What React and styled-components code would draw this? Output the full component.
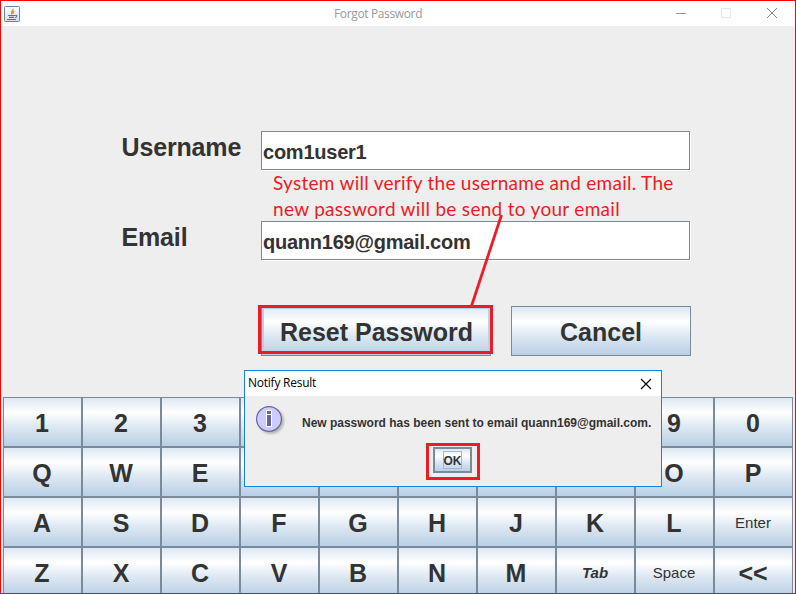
import React from 'react';
import styled, { createGlobalStyle, css } from 'styled-components';

const GlobalStyle = createGlobalStyle`
  * { box-sizing: border-box; }
  body { margin: 0; overflow: hidden; }
`;

const metal = css`
  background: linear-gradient(#dde8f3 0%, #ffffff 30%, #dde8f3 60%, #b8cfe5 100%);
  color: #333333;
  font-family: 'Liberation Sans', Arial, sans-serif;
  font-weight: bold;
  padding: 0;
  margin: 0;
  border-radius: 0;
`;

const Window = styled.div`
  position: relative;
  width: 796px;
  height: 594px;
  overflow: hidden;
  border: 1px solid #ff0000;
  background: #eeeeee;
  display: flex;
  flex-direction: column;
`;

const TitleBar = styled.header`
  flex: none;
  height: 25px;
  background: #ffffff;
  display: grid;
  grid-template-columns: 333px 1fr 138px;
  align-items: center;
  font: 12px/16px 'Open Sans', 'Noto Sans', sans-serif;
  letter-spacing: -0.36px;
  color: #999999;
`;

const JavaIcon = styled.svg`
  display: block;
  margin-left: 3px;
`;

const WindowControls = styled.svg`
  display: block;
`;

const Form = styled.form`
  flex: none;
  height: 371px;
  padding: 105px 104px 0 120px;
`;

const FieldRow = styled.div`
  display: grid;
  grid-template-columns: 140px 429px;
  height: 90px;
  align-items: start;
`;

const Label = styled.label`
  padding-left: 0.5px;
  letter-spacing: -0.15px;
  font: bold 25px/32px 'Liberation Sans', Arial, sans-serif;
  color: #333333;
`;

const TextField = styled.input`
  height: 39px;
  width: 429px;
  border: 1px solid #7a8a99;
  border-radius: 0;
  box-shadow: 1px 1px 0 #ffffff;
  background: #ffffff;
  color: #333333;
  padding: 4px 1px 0;
  outline: none;
  font: bold 20px 'Liberation Sans', Arial, sans-serif;
  letter-spacing: -0.24px;
`;

const Actions = styled.div`
  display: flex;
  justify-content: flex-end;
  gap: 20px;
  margin: -5px 0 0;
`;

const ActionButton = styled.button`
  ${metal}
  width: ${(p) => p.$width}px;
  height: 50px;
  border: 1px solid #7a8a99;
  box-shadow: ${(p) => (p.$armed ? 'inset 0 0 0 2px #b8cfe5' : 'none')};
  font-size: 25px;
  padding: ${(p) => (p.$armed ? '2px 0 0 1px' : '2px 0 0')};
`;

const Keyboard = styled.div`
  flex: none;
  display: grid;
  grid-template-columns: repeat(10, 79px);
  grid-auto-rows: 50px;
  margin-left: 2px;
`;

const Key = styled.button`
  ${metal}
  border: 1px solid #7a8a99;
  font-size: ${(p) => (p.$variant ? 15 : 25)}px;
  font-weight: ${(p) => (p.$variant === 'plain' ? 'normal' : 'bold')};
  font-style: ${(p) => (p.$variant === 'italic' ? 'italic' : 'normal')};
  padding: ${(p) => (p.$variant ? '1px 1px 0 0' : '2px 1px 0 0')};
`;

const Dialog = styled.section`
  position: absolute;
  left: 243px;
  top: 369px;
  width: 418px;
  height: 117px;
  border: 1px solid #1883d7;
  background: #eeeeee;
`;

const DialogTitle = styled.div`
  height: 25px;
  padding: 0 9px 0 3px;
  display: flex;
  align-items: center;
  justify-content: space-between;
  background: #ffffff;
  color: #000000;
  font: 12px/16px 'Open Sans', 'Noto Sans', sans-serif;
  letter-spacing: -0.24px;
`;

const DialogTitleText = styled.span`
  margin-top: -1px;
`;

const Message = styled.div`
  display: grid;
  grid-template-columns: 47px 1fr;
  height: 51px;
  padding: 8px 0 0 10px;
  align-items: start;
  font: bold 12px/16px 'Liberation Sans', Arial, sans-serif;
  color: #333333;
  white-space: nowrap;
`;

const MessageText = styled.span`
  padding-top: 11px;
  letter-spacing: -0.01px;
`;

const OkButton = styled.button`
  ${metal}
  display: flex;
  align-items: center;
  justify-content: center;
  width: 39px;
  height: 26px;
  margin-left: 188px;
  border: 2px solid #7a8a99;
  font-size: 12px;
`;

const FocusRing = styled.span`
  width: 19px;
  height: 18px;
  line-height: 18px;
  display: flex;
  justify-content: center;
  border: 1px solid #a3b8cc;
`;

const Note = styled.p`
  position: absolute;
  left: 272px;
  top: 169px;
  margin: 0;
  color: #ed1c24;
  font: 19px/26px Lato, 'Open Sans', sans-serif;
  white-space: nowrap;
`;

const NoteLine = styled.span`
  display: block;
  letter-spacing: ${(p) => p.$tracking}px;
`;

const Markup = styled.svg`
  position: absolute;
  left: -1px;
  top: -1px;
  pointer-events: none;
`;

const rows = [
  ['1', '2', '3', '4', '5', '6', '7', '8', '9', '0'],
  ['Q', 'W', 'E', 'R', 'T', 'Y', 'U', 'I', 'O', 'P'],
  ['A', 'S', 'D', 'F', 'G', 'H', 'J', 'K', 'L', 'Enter'],
  ['Z', 'X', 'C', 'V', 'B', 'N', 'M', 'Tab', 'Space', '<<'],
];
const variants = { Enter: 'plain', Space: 'plain', Tab: 'italic' };
// Keys lying underneath the open dialog carry no caption.
const covered = new Set(['4', '5', '6', '7', '8', 'R', 'T', 'Y', 'U', 'I']);

function InfoIcon() {
  return (
    <svg width="32" height="34" viewBox="0 0 32 34">
      <defs>
        <filter id="soft" x="-30%" y="-30%" width="160%" height="160%">
          <feGaussianBlur stdDeviation="1.2" />
        </filter>
      </defs>
      <circle cx="16" cy="17" r="13" fill="#999999" opacity=".65" filter="url(#soft)" />
      <circle cx="14" cy="15" r="12.4" fill="#ccccff" stroke="#666699" strokeWidth="1.2" />
      <path d="M11 6h6v17h-6z" fill="#ffffff" />
      <path d="M12 7h4v3h-4zM12 11h4v11h-4z" fill="#666699" />
    </svg>
  );
}

export default function App() {
  return (
    <>
      <GlobalStyle />
      <Window>
        <TitleBar>
          <JavaIcon width="16" height="16" viewBox="0 0 16 16">
            <defs>
              <linearGradient id="tile" x2="0" y2="1">
                <stop offset="0" stopColor="#ffffff" />
                <stop offset="1" stopColor="#d5dfe7" />
              </linearGradient>
            </defs>
            <rect x=".5" y=".5" width="15" height="15" rx="1" fill="url(#tile)" stroke="#6d8796" />
            <path d="M9.2 2.8c1 1.7-3.4 2.6-1.6 5.6M10.4 5.4c-2.2.8-1.6 1.6-1.3 2.8" fill="none" stroke="#f08426" strokeWidth="1.3" />
            <path d="M4 9.5h7M5 11.4h5M3 13.5h9M11 9.5c3-1 2.2 2-.2 2" fill="none" stroke="#4b7896" strokeWidth="1.1" />
          </JavaIcon>
          <span>Forgot Password</span>
          <WindowControls width="138" height="25" viewBox="657 1 138 25" fill="none">
            <path d="M676 13.5h10" stroke="#999999" />
            <path d="M721.5 8.5h9v9h-9z" stroke="#e6e6e6" />
            <path d="M767 8l10 10M777 8l-10 10" stroke="#888888" />
          </WindowControls>
        </TitleBar>
        <Form>
          <FieldRow>
            <Label htmlFor="username">Username</Label>
            <TextField id="username" defaultValue="com1user1" />
          </FieldRow>
          <FieldRow>
            <Label htmlFor="email">Email</Label>
            <TextField id="email" defaultValue="quann169@gmail.com" />
          </FieldRow>
          <Actions>
            <ActionButton type="button" $width={230} $armed>Reset Password</ActionButton>
            <ActionButton type="button" $width={180}>Cancel</ActionButton>
          </Actions>
        </Form>
        <Keyboard>
          {rows.flat().map((k) => (
            <Key key={k} $variant={variants[k]}>{covered.has(k) ? null : k}</Key>
          ))}
        </Keyboard>
        <Note>
          <NoteLine $tracking={0.27}>System will verify the username and email. The</NoteLine>
          <NoteLine $tracking={0.3}>new password will be send to your email</NoteLine>
        </Note>
        <Dialog>
          <DialogTitle>
            <DialogTitleText>Notify Result</DialogTitleText>
            <svg width="12" height="12" viewBox="0 0 12 12">
              <path d="M1 1l10 10M11 1L1 11" stroke="#000000" strokeWidth="1.1" />
            </svg>
          </DialogTitle>
          <Message>
            <InfoIcon />
            <MessageText>New password has been sent to email quann169@gmail.com.</MessageText>
          </Message>
          <OkButton><FocusRing>OK</FocusRing></OkButton>
        </Dialog>
        <Markup width="796" height="594" fill="none" stroke="#ed1c24" strokeWidth="3">
          <rect x="259.5" y="306.5" width="232" height="46" />
          <rect x="427.5" y="444.5" width="51" height="34" />
          <path d="M501.5 215L471.5 306" strokeWidth="2.8" />
        </Markup>
      </Window>
    </>
  );
}
